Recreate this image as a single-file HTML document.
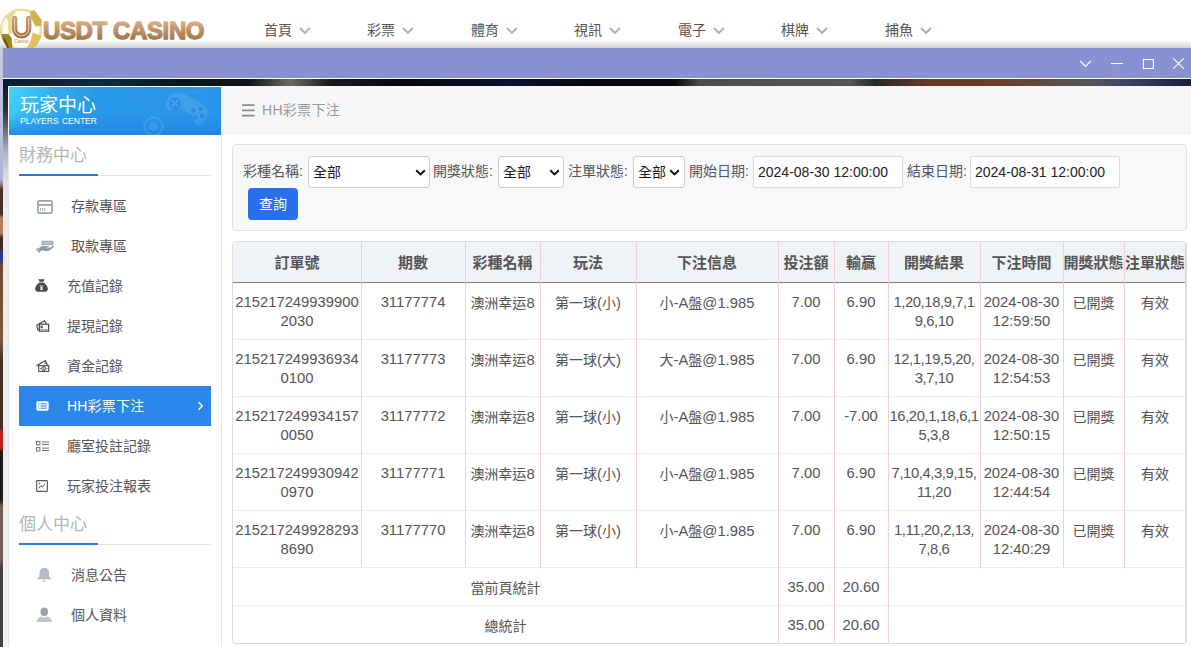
<!DOCTYPE html>
<html lang="zh-Hant">
<head>
<meta charset="utf-8">
<title>USDT CASINO - HH彩票下注</title>
<style>
*{box-sizing:border-box;margin:0;padding:0}
html,body{width:1191px;height:647px;overflow:hidden;background:#fff}
body{position:relative;font-family:"Liberation Sans","Noto Sans CJK TC",sans-serif;font-size:14px;color:#555}
.abs{position:absolute}
/* ---------- top nav ---------- */
#nav{position:absolute;left:0;top:0;width:1191px;height:48px;background:#fff}
#nav .it{position:absolute;top:20px;height:20px;line-height:20px;font-size:14px;color:#555;white-space:nowrap}
#nav .it svg{position:absolute;left:35px;top:7px}
#navshadow{position:absolute;left:0;top:40px;width:1191px;height:8px;background:linear-gradient(rgba(0,0,0,0),rgba(0,0,0,.18))}
/* ---------- layer window ---------- */
#leftedge{position:absolute;left:0;top:48px;width:3px;height:599px;background:linear-gradient(#c6cade 0px,#bcc2dc 72px,#aeb4d0 132px,#4a3020 142px,#4a3020 166px,#b08060 170px,#b08060 185px,#3a2a20 190px,#3a2a20 201px,#2a3a90 204px,#2a3a90 212px,#6a4a30 216px,#7a5a40 292px,#403028 314px,#403028 380px,#c02020 384px,#c02020 400px,#201818 404px,#201818 452px,#706058 458px,#706058 512px,#484040 518px,#484040 599px)}
#tbar{position:absolute;left:3px;top:48px;width:1188px;height:30px;background:#8892d0}
#win{position:absolute;left:3px;top:78px;width:1188px;height:569px;background:#fff}
#bgimg{position:absolute;left:0;top:1px;width:1188px;height:8px;background:linear-gradient(90deg,#0a1a34 0px,#0c2a48 97px,#081424 177px,#101418 247px,#6c6c62 287px,#181a1c 327px,#05070c 397px,#0a1030 507px,#04050a 597px,#08080c 672px,#4c4c4c 697px,#555555 847px,#262a2a 872px,#6a3828 927px,#6a3c2a 997px,#5a4c44 1047px,#555558 1087px,#3a4264 1127px,#161c3c 1188px)}
#bgleft{position:absolute;left:0;top:9px;width:5px;height:560px;background:linear-gradient(#0c1c38 0,#2a3348 25px,#6c7282 45px,#b0b4c0 65px,#dcdde2 90px,#ececee 120px,#f0f0f0 100%)}
/* ---------- sidebar ---------- */
#side{position:absolute;left:5px;top:8px;width:214px;height:561px;background:#fff;border-left:1px solid #e2e2e4;border-right:1px solid #e3e7eb}
#shead{position:absolute;left:0;top:1px;width:212px;height:48px;box-shadow:-1px 0 0 #fff,-1px -1px 0 #fff;background:linear-gradient(rgba(30,130,230,0) 55%,rgba(30,128,230,.75) 100%),linear-gradient(115deg,#45d4f8 0,#32b2f0 18%,#2a98e9 38%,#2895e8 100%);overflow:hidden}
#shead .t1{position:absolute;left:11px;top:7px;font-size:19px;line-height:24px;color:#fff;white-space:nowrap}
#shead .t2{position:absolute;left:11px;top:29px;font-size:8.500px;line-height:10px;color:#fff;white-space:nowrap;word-spacing:1px}
.sec{position:absolute;left:10px;width:192px;height:44px}
.sec .tt{position:absolute;left:0;top:1px;font-size:17px;line-height:24px;color:#b4b4b4;white-space:nowrap}
.sec .l1{position:absolute;left:0;top:32px;width:192px;height:1px;background:#e2e5e8}
.sec .l2{position:absolute;left:0;top:31px;width:79px;height:2px;background:#1f7fe6}
.mi{position:absolute;left:10px;width:192px;height:40px;line-height:40px;font-size:14px;color:#555;white-space:nowrap}
.mi span{position:absolute;top:0}
.mi svg{position:absolute}
.mi.act{background:#2a86e8;color:#fff;letter-spacing:.2px}
/* ---------- content ---------- */
#chead{position:absolute;left:219px;top:8px;width:969px;height:49px;background:#f5f6f8}
#chead .tx{position:absolute;left:40px;top:13px;line-height:22px;font-size:14px;color:#999;white-space:nowrap;letter-spacing:.3px}
#fbox{position:absolute;left:229px;top:66px;width:955px;height:87px;background:#f7f8fa;border:1px solid #dcdfe3;border-radius:4px}
.lb{position:absolute;top:15px;height:22px;line-height:22px;font-size:14px;color:#555;white-space:nowrap}
.sel,.inp{position:absolute;top:11px;height:32px;background:#fff;border:1px solid #cfcfcf;border-radius:3px;line-height:29px;font-size:14px;color:#1a1a1a;white-space:nowrap}
.inp{border-color:#dcdcdc;border-radius:2px}
.sel span{position:absolute;left:4px;top:1px}
.inp span{position:absolute;left:4px;top:1px;font-family:"Liberation Sans",sans-serif;color:#222}
.sel svg{position:absolute;top:12px}
#btn{position:absolute;left:15px;top:43px;width:50px;height:32px;border-radius:4px;background:#2a70ec;color:#fff;font-size:14px;line-height:32px;text-align:center}
/* ---------- table ---------- */
#tbl{position:absolute;left:229px;top:163px;width:955px;height:403px;border:1px solid #d9dce0;border-radius:4px;overflow:hidden;background:#fff}
#tbl .hd{position:absolute;left:0;top:0;width:953px;height:41px;background:#eff2f6;border-bottom:1px solid #7d7d7d}
.c{position:absolute;text-align:center;font-size:14px;line-height:19px;color:#555;white-space:nowrap}
.c i{font-style:normal;font-size:14.800px}
.c.n{font-size:14.800px}
.h{position:absolute;text-align:center;font-size:15px;line-height:20px;color:#555;font-weight:bold;white-space:nowrap;top:11px}
.vl{position:absolute;top:0;width:1px;background:#f3cfd0}
.hl{position:absolute;left:0;width:953px;height:1px;background:#ebebed}
</style>
</head>
<body>
<div id="nav">
  <div id="navshadow"></div>
  <svg class="abs" style="left:0;top:0" width="215" height="48" viewBox="0 0 215 48">
    <defs>
      <radialGradient id="gb" cx="50%" cy="48%" r="52%"><stop offset="0" stop-color="#ffffff"/><stop offset=".8" stop-color="#fffdf2"/><stop offset=".93" stop-color="#efdb8e"/><stop offset="1" stop-color="#c4a43c"/></radialGradient>
      <linearGradient id="gu" x1="0" y1="0" x2="0" y2="1"><stop offset="0" stop-color="#c49a72"/><stop offset="1" stop-color="#a37346"/></linearGradient>
      <linearGradient id="gt" x1="0" y1="21" x2="0" y2="40" gradientUnits="userSpaceOnUse"><stop offset="0" stop-color="#dbb083"/><stop offset=".5" stop-color="#bd9165"/><stop offset="1" stop-color="#a1754b"/></linearGradient>
    </defs>
    <circle cx="21" cy="29.500" r="21" fill="url(#gb)"/>
    <path d="M30.200 11 L34.500 10.300 L42 20.500 L41 26 L35.500 26.500 L31 17.500Z" fill="#cfb248"/>
    <path d="M4.500 17 L14.500 10.400 L15.500 12.500 L11.500 17 L11.800 33.500 L8.500 34 L8 20Z" fill="#e6d07c" opacity=".85"/>
    <path d="M1.500 34 L8.500 34 L11.500 38 L12.500 48 L8 48 L3 41Z" fill="#a4841e"/>
    <path d="M2.200 37 L6 40 L9 48 L7 48Z" fill="#6e5408"/>
    <path d="M32.500 32.500 L41.500 36 L38 44 L33 48 L27 48 L31 40Z" fill="#d8bd58" opacity=".9"/>
    <path d="M15 9.600 L30.200 11 L31 17.500" fill="none" stroke="#dcc468" stroke-width=".8"/>
    <path d="M14.600 18.300 V28.800 a7.050 7.050 0 0 0 14.100 0 V18.300" fill="none" stroke="url(#gu)" stroke-width="5.300" stroke-linecap="round"/>
    <path d="M14.600 18.300 V28.800 a7.050 7.050 0 0 0 14.100 0 V18.300" fill="none" stroke="#f3e0c6" stroke-width=".9" stroke-linecap="round"/>
    <text x="21.500" y="43" font-size="4.600" text-anchor="middle" fill="#b08a58" font-family="Liberation Sans, sans-serif">Casino</text>
    <text x="43" y="39.300" font-size="24" font-weight="bold" font-family="Liberation Sans, sans-serif" fill="url(#gt)" stroke="url(#gt)" stroke-width="1.300" stroke-linejoin="round" textLength="161.500" lengthAdjust="spacing">USDT CASINO</text>
  </svg>
  <div class="it" style="left:264px">首頁<svg width="12" height="8" viewBox="0 0 12 8"><path d="M.9 1 L5.900 6 L10.900 1" fill="none" stroke="#a4acd2" stroke-width="1.800"/></svg></div>
  <div class="it" style="left:367px">彩票<svg width="12" height="8" viewBox="0 0 12 8"><path d="M.9 1 L5.900 6 L10.900 1" fill="none" stroke="#a4acd2" stroke-width="1.800"/></svg></div>
  <div class="it" style="left:471px">體育<svg width="12" height="8" viewBox="0 0 12 8"><path d="M.9 1 L5.900 6 L10.900 1" fill="none" stroke="#a4acd2" stroke-width="1.800"/></svg></div>
  <div class="it" style="left:574px">視訊<svg width="12" height="8" viewBox="0 0 12 8"><path d="M.9 1 L5.900 6 L10.900 1" fill="none" stroke="#a4acd2" stroke-width="1.800"/></svg></div>
  <div class="it" style="left:678px">電子<svg width="12" height="8" viewBox="0 0 12 8"><path d="M.9 1 L5.900 6 L10.900 1" fill="none" stroke="#a4acd2" stroke-width="1.800"/></svg></div>
  <div class="it" style="left:781px">棋牌<svg width="12" height="8" viewBox="0 0 12 8"><path d="M.9 1 L5.900 6 L10.900 1" fill="none" stroke="#a4acd2" stroke-width="1.800"/></svg></div>
  <div class="it" style="left:885px">捕魚<svg width="12" height="8" viewBox="0 0 12 8"><path d="M.9 1 L5.900 6 L10.900 1" fill="none" stroke="#a4acd2" stroke-width="1.800"/></svg></div>
</div>

<div id="leftedge"></div>
<div id="tbar">
  <svg class="abs" style="left:1076px;top:8px" width="110" height="16" viewBox="0 0 110 16">
    <g fill="none" stroke="#fff" stroke-width="1.100">
      <path d="M1.200 5 L6.500 10.500 L11.800 5"/>
      <path d="M32 7.500 H44"/>
      <rect x="64.400" y="3.500" width="10" height="9"/>
      <path d="M94.300 2.300 L104.800 12.700 M104.800 2.300 L94.300 12.700"/>
    </g>
  </svg>
</div>

<div id="win">
  <div id="bgimg"></div>
  <div id="bgleft"></div>

  <div id="side">
    <div id="shead">
      <div class="t1">玩家中心</div>
      <div class="t2">PLAYERS CENTER</div>
      <svg class="abs" style="left:0;top:0" width="212" height="48" viewBox="0 0 212 48">
        <g fill="#fff" opacity=".1">
          <path transform="translate(0 2.500) rotate(27 177 20)" d="M156 17 c0-7 7-10 14-10 h14 c9 0 15 4 15 11 c0 9-5 13-9 9 l-5-5 h-16 l-5 5 c-4 4-8 0-8-10z"/>
          <circle cx="144.500" cy="39.500" r="9" fill="none" stroke="#fff" stroke-width="2.500"/><circle cx="144.500" cy="39.500" r="4.500"/>
          <path d="M183 8 q2-5 5-3 q3 3 6 0" fill="none" stroke="#fff" stroke-width="1"/>
        </g>
        <g fill="#2484e4" opacity=".75"><circle cx="166" cy="16.400" r="6"/><circle cx="184.500" cy="23.500" r="2.300"/><circle cx="191.500" cy="21.800" r="2.300"/><circle cx="186.500" cy="30.500" r="2.300"/><circle cx="193" cy="29" r="2.300"/></g>
        <path d="M162.500 13 l7 6.800 M169.500 13 l-7 6.800" stroke="#4aa6ee" stroke-width="1.600"/>
      </svg>
    </div>

    <div class="sec" style="top:57px"><div class="tt">財務中心</div><div class="l1"></div><div class="l2"></div></div>

    <div class="mi" style="top:100px">
      <svg style="left:18px;top:14px" width="16" height="14" viewBox="0 0 16 14"><rect x=".9" y=".9" width="14.200" height="12.200" rx="1.600" fill="none" stroke="#9aa3ad" stroke-width="1.700"/><path d="M1 4.900H15" stroke="#9aa3ad" stroke-width="1.800"/><path d="M3.600 8v2.800M5.700 8v2.800M7.700 8v2.800" stroke="#9aa3ad" stroke-width="1"/></svg>
      <span style="left:52px">存款專區</span>
    </div>
    <div class="mi" style="top:140px">
      <svg style="left:17px;top:14px" width="19" height="14" viewBox="0 0 19 14"><rect x="6" y="1.200" width="11" height="3.500" fill="#b9c0c8" stroke="#8f99a3" stroke-width=".8"/><g fill="#8f99a3"><path d="M2.200 8.800C4 6.600 6 6 8 6l4.500.2c.8.100.8 1.200 0 1.300L9 7.900c2 .7 4 .500 5.500-.300l2.800-1.800c.7-.4 1.300.4.700 1L14.600 9.800c-1.600 1.200-3.600 1.400-5.600 1.100l-3.400-.6-1.400 1.100z"/><path d="M.2 9.200 1.400 8 4.300 11.800 3 13z"/></g></svg>
      <span style="left:52px">取款專區</span>
    </div>
    <div class="mi" style="top:180px">
      <svg style="left:16px;top:13px" width="13" height="13" viewBox="0 0 13 13"><path d="M3.400.3h6.200L8.400 2.800H4.600z" fill="#4a4a4a"/><path d="M4.500 3.500h4c2.300 1.500 4.300 4 4.300 6.300 0 1.800-1 2.900-2.800 2.900H3c-1.800 0-2.800-1.100-2.800-2.900 0-2.300 2-4.800 4.300-6.300z" fill="#4a4a4a"/><path d="M4.900 6 6.500 8.100 8.100 6M6.500 8.100v3M5 8.900h3M5 10.200h3" stroke="#fff" stroke-width=".85" fill="none"/></svg>
      <span style="left:48px">充值記錄</span>
    </div>
    <div class="mi" style="top:220px">
      <svg style="left:17px;top:14px" width="14" height="12" viewBox="0 0 14 12"><g fill="none" stroke="#4a4a4a"><rect x="3.400" y="4.200" width="9.200" height="7" stroke-width="1.200"/><path d="M3.200 9.600 1.900 10 .7 5.200 8.600.7 10.300 4" stroke-width="1.100" stroke-linejoin="round"/><rect x="4.900" y="6.100" width="1.500" height="1.700" stroke-width=".8"/><path d="M4.600 9.700H11.600" stroke-width=".9" stroke-dasharray="1 .5"/></g></svg>
      <span style="left:48px">提現記錄</span>
    </div>
    <div class="mi" style="top:260px">
      <svg style="left:17px;top:14px" width="14" height="12" viewBox="0 0 14 12"><g fill="none" stroke="#4a4a4a"><rect x="2.700" y="5.700" width="10" height="5.800" stroke-width="1.100"/><ellipse cx="7.700" cy="8.600" rx="1.800" ry="2.100" stroke-width="1"/><path d="M7.700 7.300v2.600" stroke-width=".8"/><path d="M.5 5.700 9.400.6 11.400 5" stroke-width="1.200" stroke-linejoin="round"/></g><g fill="#4a4a4a"><circle cx="4.500" cy="8.600" r=".6"/><circle cx="10.900" cy="8.600" r=".6"/><circle cx="8.900" cy="3.400" r=".7"/></g></svg>
      <span style="left:48px">資金記錄</span>
    </div>
    <div class="mi act" style="top:300px">
      <svg style="left:17px;top:15px" width="13" height="10" viewBox="0 0 13 10"><rect x=".3" y=".3" width="12.400" height="9.400" rx="1.800" fill="#fff"/><path d="M2.300 2.800h1M4.500 2.800h6.200M2.300 5h1M4.500 5h6.200M2.300 7.200h1M4.500 7.200h6.200" stroke="#2a86e8" stroke-width="1"/></svg>
      <span style="left:48px">HH彩票下注</span>
      <svg style="left:178px;top:15px" width="7" height="10" viewBox="0 0 7 10"><path d="M1.500 1.200 5.300 5 1.500 8.800" fill="none" stroke="#fff" stroke-width="1.400"/></svg>
    </div>
    <div class="mi" style="top:340px">
      <svg style="left:17px;top:15px" width="13" height="11" viewBox="0 0 13 11"><g fill="none" stroke="#707070" stroke-width="1"><rect x=".5" y=".5" width="3.400" height="3.400"/><rect x=".5" y="6.600" width="3.400" height="3.400"/><path d="M6 1h7M6 3.400h7M6 7.100h7M6 9.500h7"/></g></svg>
      <span style="left:48px">廳室投註記錄</span>
    </div>
    <div class="mi" style="top:380px">
      <svg style="left:17px;top:14px" width="12" height="12" viewBox="0 0 12 12"><rect x=".6" y=".6" width="10.800" height="10.800" rx=".8" fill="none" stroke="#555" stroke-width="1.100"/><path d="M2.600 8.400 4.800 5.800 6.400 7.200 9.200 3.800" fill="none" stroke="#555" stroke-width="1"/><circle cx="3.500" cy="3.400" r=".8" fill="#555"/></svg>
      <span style="left:48px">玩家投注報表</span>
    </div>

    <div class="sec" style="top:426px"><div class="tt">個人中心</div><div class="l1"></div><div class="l2"></div></div>

    <div class="mi" style="top:469px">
      <svg style="left:16.500px;top:11.800px" width="16.500" height="15.600" viewBox="0 0 16 15.100"><path d="M8 .6c-2.800 0-4.600 2-4.600 4.800v2.800c0 1-.7 1.900-1.900 2.700-.5.400-.3 1 .3 1h12.400c.6 0 .8-.6.300-1-1.200-.8-1.900-1.700-1.900-2.700V5.400C12.600 2.600 10.800.6 8 .6z" fill="#b6bcc2"/><path d="M6.600 12.800a1.400 1.400 0 0 0 2.800 0z" fill="#b6bcc2"/></svg>
      <span style="left:52px">消息公告</span>
    </div>
    <div class="mi" style="top:509px">
      <svg style="left:16.500px;top:12px" width="16.500" height="15.500" viewBox="0 0 17 16"><path d="M.6 15.500c.2-3.800 2.800-5.200 5-5.600.8.600 1.800 1 2.900 1s2.100-.4 2.900-1c2.200.4 4.800 1.800 5 5.600z" fill="#bfc4c9"/><ellipse cx="8.500" cy="5" rx="3.900" ry="4.400" fill="#9ba3ab"/></svg>
      <span style="left:52px">個人資料</span>
    </div>
  </div>

  <div id="chead">
    <svg class="abs" style="left:20px;top:18px" width="13" height="13" viewBox="0 0 13 13"><path d="M0 1.2H12.5M0 6.4H12.5M0 11.6H12.5" stroke="#8a8a8a" stroke-width="1.8"/></svg>
    <div class="tx">HH彩票下注</div>
  </div>

  <div id="fbox">
    <div class="lb" style="left:10px">彩種名稱:</div>
    <div class="sel" style="left:75px;width:122px"><span>全部</span><svg style="left:106px" width="11" height="7" viewBox="0 0 11 7"><path d="M1.2 1.2 L5.5 5.4 L9.8 1.2" fill="none" stroke="#111" stroke-width="2"/></svg></div>
    <div class="lb" style="left:200px">開獎狀態:</div>
    <div class="sel" style="left:265px;width:66px"><span>全部</span><svg style="left:50px" width="11" height="7" viewBox="0 0 11 7"><path d="M1.2 1.2 L5.5 5.4 L9.8 1.2" fill="none" stroke="#111" stroke-width="2"/></svg></div>
    <div class="lb" style="left:335px">注單狀態:</div>
    <div class="sel" style="left:400px;width:52px"><span>全部</span><svg style="left:35px" width="11" height="7" viewBox="0 0 11 7"><path d="M1.2 1.2 L5.5 5.4 L9.8 1.2" fill="none" stroke="#111" stroke-width="2"/></svg></div>
    <div class="lb" style="left:456px">開始日期:</div>
    <div class="inp" style="left:520px;width:150px"><span>2024-08-30 12:00:00</span></div>
    <div class="lb" style="left:674px">結束日期:</div>
    <div class="inp" style="left:737px;width:150px"><span>2024-08-31 12:00:00</span></div>
    <div id="btn">查詢</div>
  </div>
  <div id="tbl">
    <div class="hd"></div>
    <div class="h" style="left:0px;width:128px">訂單號</div>
    <div class="h" style="left:128px;width:104px">期數</div>
    <div class="h" style="left:232px;width:75px">彩種名稱</div>
    <div class="h" style="left:307px;width:96px">玩法</div>
    <div class="h" style="left:403px;width:142px">下注信息</div>
    <div class="h" style="left:545px;width:56px">投注額</div>
    <div class="h" style="left:601px;width:54px">輸贏</div>
    <div class="h" style="left:655px;width:92px">開獎結果</div>
    <div class="h" style="left:747px;width:83px">下注時間</div>
    <div class="h" style="left:830px;width:61px">開獎狀態</div>
    <div class="h" style="left:891px;width:62px">注單狀態</div>
    <div class="hl" style="top:97px"></div>
    <div class="hl" style="top:154px"></div>
    <div class="hl" style="top:211px"></div>
    <div class="hl" style="top:268px"></div>
    <div class="hl" style="top:325px"></div>
    <div class="hl" style="top:363px"></div>
    <div class="vl" style="left:128px;height:325px"></div>
    <div class="vl" style="left:232px;height:325px"></div>
    <div class="vl" style="left:307px;height:325px"></div>
    <div class="vl" style="left:403px;height:325px"></div>
    <div class="vl" style="left:545px;height:401px"></div>
    <div class="vl" style="left:601px;height:401px"></div>
    <div class="vl" style="left:655px;height:401px"></div>
    <div class="vl" style="left:747px;height:325px"></div>
    <div class="vl" style="left:830px;height:325px"></div>
    <div class="vl" style="left:891px;height:325px"></div>
    <div class="vl" style="left:952px;height:401px"></div>
    <div class="c n" style="left:0px;top:51px;width:128px">215217249939900<br>2030</div>
    <div class="c n" style="left:128px;top:51px;width:104px">31177774</div>
    <div class="c" style="left:232px;top:52px;width:75px">澳洲幸运<i>8</i></div>
    <div class="c" style="left:307px;top:52px;width:96px">第一球<i>(</i>小<i>)</i></div>
    <div class="c" style="left:403px;top:52px;width:142px">小<i>-A</i>盤<i>@1.985</i></div>
    <div class="c n" style="left:545px;top:51px;width:56px">7.00</div>
    <div class="c n" style="left:601px;top:51px;width:54px">6.90</div>
    <div class="c n" style="left:655px;top:51px;width:92px;letter-spacing:-.4px">1,20,18,9,7,1<br>9,6,10</div>
    <div class="c n" style="left:747px;top:51px;width:83px">2024-08-30<br>12:59:50</div>
    <div class="c" style="left:830px;top:52px;width:61px">已開獎</div>
    <div class="c" style="left:891px;top:52px;width:62px">有效</div>
    <div class="c n" style="left:0px;top:108px;width:128px">215217249936934<br>0100</div>
    <div class="c n" style="left:128px;top:108px;width:104px">31177773</div>
    <div class="c" style="left:232px;top:109px;width:75px">澳洲幸运<i>8</i></div>
    <div class="c" style="left:307px;top:109px;width:96px">第一球<i>(</i>大<i>)</i></div>
    <div class="c" style="left:403px;top:109px;width:142px">大<i>-A</i>盤<i>@1.985</i></div>
    <div class="c n" style="left:545px;top:108px;width:56px">7.00</div>
    <div class="c n" style="left:601px;top:108px;width:54px">6.90</div>
    <div class="c n" style="left:655px;top:108px;width:92px;letter-spacing:-.4px">12,1,19,5,20,<br>3,7,10</div>
    <div class="c n" style="left:747px;top:108px;width:83px">2024-08-30<br>12:54:53</div>
    <div class="c" style="left:830px;top:109px;width:61px">已開獎</div>
    <div class="c" style="left:891px;top:109px;width:62px">有效</div>
    <div class="c n" style="left:0px;top:165px;width:128px">215217249934157<br>0050</div>
    <div class="c n" style="left:128px;top:165px;width:104px">31177772</div>
    <div class="c" style="left:232px;top:166px;width:75px">澳洲幸运<i>8</i></div>
    <div class="c" style="left:307px;top:166px;width:96px">第一球<i>(</i>小<i>)</i></div>
    <div class="c" style="left:403px;top:166px;width:142px">小<i>-A</i>盤<i>@1.985</i></div>
    <div class="c n" style="left:545px;top:165px;width:56px">7.00</div>
    <div class="c n" style="left:601px;top:165px;width:54px">-7.00</div>
    <div class="c n" style="left:655px;top:165px;width:92px;letter-spacing:-.4px">16,20,1,18,6,1<br>5,3,8</div>
    <div class="c n" style="left:747px;top:165px;width:83px">2024-08-30<br>12:50:15</div>
    <div class="c" style="left:830px;top:166px;width:61px">已開獎</div>
    <div class="c" style="left:891px;top:166px;width:62px">有效</div>
    <div class="c n" style="left:0px;top:222px;width:128px">215217249930942<br>0970</div>
    <div class="c n" style="left:128px;top:222px;width:104px">31177771</div>
    <div class="c" style="left:232px;top:223px;width:75px">澳洲幸运<i>8</i></div>
    <div class="c" style="left:307px;top:223px;width:96px">第一球<i>(</i>小<i>)</i></div>
    <div class="c" style="left:403px;top:223px;width:142px">小<i>-A</i>盤<i>@1.985</i></div>
    <div class="c n" style="left:545px;top:222px;width:56px">7.00</div>
    <div class="c n" style="left:601px;top:222px;width:54px">6.90</div>
    <div class="c n" style="left:655px;top:222px;width:92px;letter-spacing:-.4px">7,10,4,3,9,15,<br>11,20</div>
    <div class="c n" style="left:747px;top:222px;width:83px">2024-08-30<br>12:44:54</div>
    <div class="c" style="left:830px;top:223px;width:61px">已開獎</div>
    <div class="c" style="left:891px;top:223px;width:62px">有效</div>
    <div class="c n" style="left:0px;top:279px;width:128px">215217249928293<br>8690</div>
    <div class="c n" style="left:128px;top:279px;width:104px">31177770</div>
    <div class="c" style="left:232px;top:280px;width:75px">澳洲幸运<i>8</i></div>
    <div class="c" style="left:307px;top:280px;width:96px">第一球<i>(</i>小<i>)</i></div>
    <div class="c" style="left:403px;top:280px;width:142px">小<i>-A</i>盤<i>@1.985</i></div>
    <div class="c n" style="left:545px;top:279px;width:56px">7.00</div>
    <div class="c n" style="left:601px;top:279px;width:54px">6.90</div>
    <div class="c n" style="left:655px;top:279px;width:92px;letter-spacing:-.4px">1,11,20,2,13,<br>7,8,6</div>
    <div class="c n" style="left:747px;top:279px;width:83px">2024-08-30<br>12:40:29</div>
    <div class="c" style="left:830px;top:280px;width:61px">已開獎</div>
    <div class="c" style="left:891px;top:280px;width:62px">有效</div>
    <div class="c" style="left:0;top:337px;width:545px">當前頁統計</div>
    <div class="c n" style="left:545px;top:336px;width:56px">35.00</div>
    <div class="c n" style="left:601px;top:336px;width:54px">20.60</div>
    <div class="c" style="left:0;top:375px;width:545px">總統計</div>
    <div class="c n" style="left:545px;top:374px;width:56px">35.00</div>
    <div class="c n" style="left:601px;top:374px;width:54px">20.60</div>
  </div>
</div>
</body>
</html>
